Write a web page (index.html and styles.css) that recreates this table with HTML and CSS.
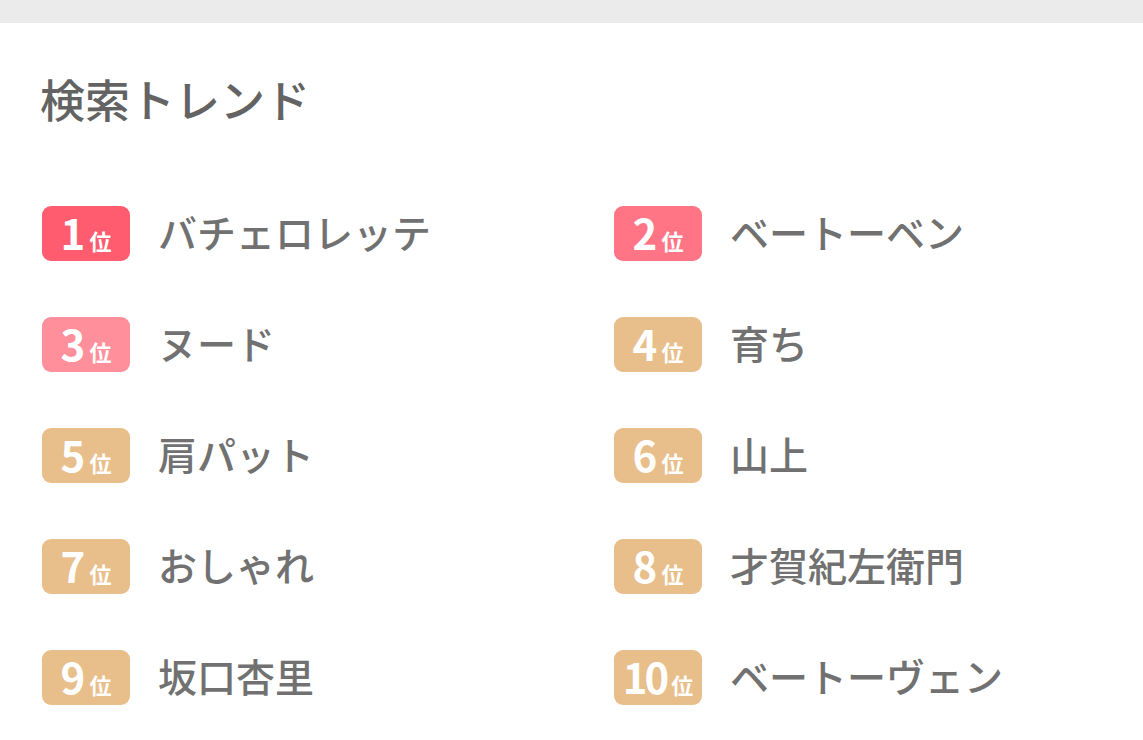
FILE: index.html
```html
<!DOCTYPE html>
<html lang="ja">
<head>
<meta charset="utf-8">
<title>検索トレンド</title>
<link rel="stylesheet" href="styles.css">
</head>
<body>
<div class="topbar"></div>
<section class="trend">
  <h2 class="trend-title">検索トレンド</h2>
  <ol class="trend-list">
    <li class="trend-item"><span class="rank rank-1"><span class="num">1</span><span class="suffix">位</span></span><span class="word">バチェロレッテ</span></li>
    <li class="trend-item"><span class="rank rank-2"><span class="num">2</span><span class="suffix">位</span></span><span class="word">ベートーベン</span></li>
    <li class="trend-item"><span class="rank rank-3"><span class="num">3</span><span class="suffix">位</span></span><span class="word">ヌード</span></li>
    <li class="trend-item"><span class="rank"><span class="num">4</span><span class="suffix">位</span></span><span class="word">育ち</span></li>
    <li class="trend-item"><span class="rank"><span class="num">5</span><span class="suffix">位</span></span><span class="word">肩パット</span></li>
    <li class="trend-item"><span class="rank"><span class="num">6</span><span class="suffix">位</span></span><span class="word">山上</span></li>
    <li class="trend-item"><span class="rank"><span class="num">7</span><span class="suffix">位</span></span><span class="word">おしゃれ</span></li>
    <li class="trend-item"><span class="rank"><span class="num">8</span><span class="suffix">位</span></span><span class="word">才賀紀左衛門</span></li>
    <li class="trend-item"><span class="rank"><span class="num">9</span><span class="suffix">位</span></span><span class="word">坂口杏里</span></li>
    <li class="trend-item"><span class="rank"><span class="num num-wide">10</span><span class="suffix">位</span></span><span class="word">ベートーヴェン</span></li>
  </ol>
</section>
</body>
</html>
```

FILE: styles.css
```css
* { box-sizing: border-box; }

html, body {
  margin: 0;
  padding: 0;
  background: #ffffff;
  font-family: "Noto Sans CJK JP", "Noto Sans", sans-serif;
}

.topbar {
  height: 23px;
  background: #ebebeb;
}

.trend {
  padding: 53px 0 0 40px;
}

.trend-title {
  margin: 0;
  font-size: 45px;
  line-height: 45px;
  font-weight: 500;
  color: #636363;
}

.trend-list {
  list-style: none;
  margin: 85px 0 0 0;
  padding: 0 0 0 2px;
  display: grid;
  grid-template-columns: 572px 1fr;
  row-gap: 56px;
}

.trend-item {
  display: flex;
  align-items: center;
  gap: 28px;
  height: 55px;
}

.rank {
  flex: 0 0 88px;
  width: 88px;
  height: 55px;
  border-radius: 9px;
  background: #e8be8b;
  color: #ffffff;
  display: flex;
  align-items: baseline;
  justify-content: center;
  padding-top: 4px;
}

.rank-1 { background: #ff5c6f; }
.rank-2 { background: #ff7585; }
.rank-3 { background: #ff8f9b; }

.num {
  font-size: 42px;
  line-height: 44px;
  font-weight: 700;
  letter-spacing: -1px;
}

.num-wide {
  letter-spacing: -3px;
}

.suffix {
  font-size: 22px;
  font-weight: 700;
  margin-left: 5px;
}

.word {
  font-size: 39px;
  line-height: 50px;
  padding-bottom: 5px;
  font-weight: 500;
  color: #717171;
  white-space: nowrap;
}
```
